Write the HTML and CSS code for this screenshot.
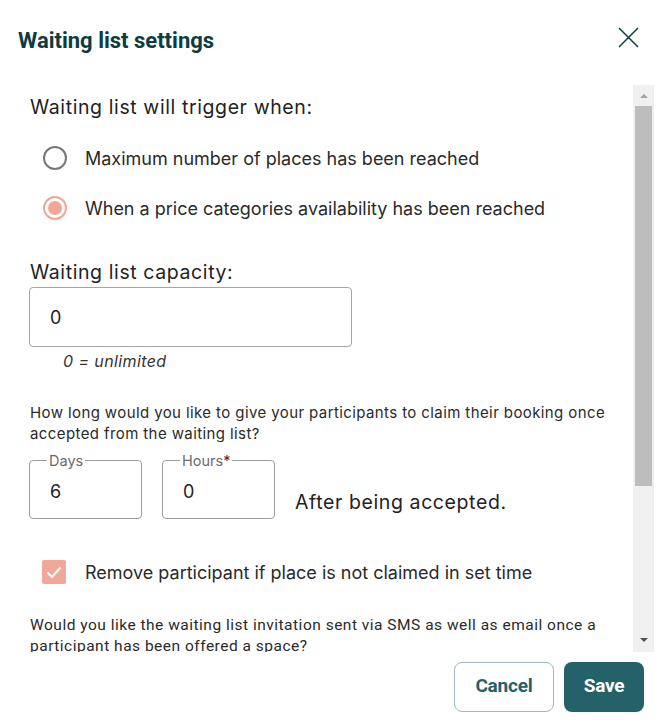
FILE: index.html
```html
<!DOCTYPE html>
<html lang="en">
<head>
<meta charset="utf-8">
<title>Waiting list settings</title>
<link rel="stylesheet" href="styles.css">
</head>
<body>
<div class="dialog">
  <header class="head">
    <h1 class="title">Waiting list settings</h1>
    <button class="close" aria-label="Close">
      <svg width="21" height="21" viewBox="0 0 21 21"><path d="M1 1 L20 20 M20 1 L1 20" stroke="#0b3d40" stroke-width="1.5" fill="none"/></svg>
    </button>
  </header>
  <div class="body">
    <div class="content">
      <p class="q">Waiting list will trigger when:</p>
      <div class="radios">
        <label class="radio"><span class="ring"></span>Maximum number of places has been reached</label>
        <label class="radio on"><span class="ring"></span>When a price categories availability has been reached</label>
      </div>
      <p class="q cap">Waiting list capacity:</p>
      <div class="input">0</div>
      <p class="hint">0 = unlimited</p>
      <p class="small">How long would you like to give your participants to claim their booking once accepted from the waiting list?</p>
      <div class="timerow">
        <fieldset class="box"><legend>Days</legend><span class="val">6</span></fieldset>
        <fieldset class="box"><legend>Hours<span class="req">*</span></legend><span class="val">0</span></fieldset>
        <span class="after">After being accepted.</span>
      </div>
      <label class="check"><span class="tick"><svg width="24" height="24" viewBox="0 0 24 24"><path d="M5.5 12.5 L10 17 L18.5 7.5" stroke="#fff" stroke-width="2" fill="none"/></svg></span>Remove participant if place is not claimed in set time</label>
      <p class="sms">Would you like the waiting list invitation sent via SMS as well as email once a participant has been offered a space?</p>
    </div>
    <div class="scrollbar" aria-hidden="true">
      <span class="sb-btn"><span class="arrow up"></span></span>
      <span class="sb-thumb"></span>
      <span class="sb-rest"></span>
      <span class="sb-btn"><span class="arrow down"></span></span>
    </div>
  </div>
  <footer class="foot">
    <button class="btn cancel">Cancel</button>
    <button class="btn save">Save</button>
  </footer>
</div>
</body>
</html>
```

FILE: styles.css
```css
* { box-sizing: border-box; }
html, body { margin: 0; padding: 0; background: #fff; }
body { font-family: Inter, "Noto Sans", sans-serif; color: #222; }

.dialog {
  width: 663px;
  height: 723px;
  display: flex;
  flex-direction: column;
  background: #fff;
}

.head {
  height: 85px;
  flex: none;
  display: flex;
  justify-content: space-between;
  align-items: flex-start;
  padding: 27px 24px 0 18px;
}
.title {
  margin: 0;
  font-family: Roboto, "Liberation Sans", sans-serif;
  font-weight: 700;
  font-size: 22px;
  line-height: 28px;
  letter-spacing: 0;
  color: #0b3d40;
}
.close {
  padding: 0;
  border: 0;
  background: none;
  width: 21px;
  height: 21px;
}
.close svg { display: block; }

.body {
  height: 567px;
  flex: none;
  margin-right: 9px;
  display: flex;
}
.content {
  flex: 1;
  min-width: 0;
  overflow: hidden;
  padding: 10px 0 0 30px;
}

.scrollbar {
  width: 21px;
  flex: none;
  background: #f0f0f0;
  display: flex;
  flex-direction: column;
}
.sb-btn {
  height: 21px;
  flex: none;
  display: flex;
  align-items: center;
  justify-content: center;
}
.sb-thumb {
  height: 380px;
  margin: 0 2px;
  background: #bdbdbd;
  flex: none;
}
.sb-rest { flex: 1; }
.arrow {
  width: 0;
  height: 0;
  border-left: 4px solid transparent;
  border-right: 4px solid transparent;
}
.arrow.up { border-bottom: 4px solid #a3a3a3; margin-top: 1px; }
.arrow.down { border-top: 4px solid #505050; margin-top: -4px; }

p { margin: 0; }
.q {
  font-size: 19.5px;
  line-height: 24px;
  letter-spacing: 0.6px;
  color: #222;
}
.radios { margin-top: 14px; }
.radio {
  display: flex;
  align-items: center;
  height: 50px;
  font-size: 18px;
  color: #2a2a2a;
}
.ring {
  width: 24px;
  height: 24px;
  border-radius: 50%;
  border: 2px solid #777;
  margin: 0 18px 0 13px;
  flex: none;
  display: flex;
  align-items: center;
  justify-content: center;
}
.radio.on .ring { border-color: #f0a798; }
.radio.on .ring::after {
  content: "";
  width: 14px;
  height: 14px;
  border-radius: 50%;
  background: #f0a798;
}

.cap { margin-top: 27px; }
.input {
  margin-top: 3px;
  margin-left: -1px;
  width: 323px;
  height: 60px;
  border: 1px solid #a5a5a5;
  border-radius: 4px;
  padding-left: 20px;
  display: flex;
  align-items: center;
  font-size: 18px;
  color: #222;
}
.hint {
  margin-top: 5px;
  margin-left: 33px;
  font-size: 16px;
  line-height: 18px;
  letter-spacing: 0.4px;
  font-style: italic;
  color: #333;
}
.small {
  margin-top: 32px;
  font-size: 15px;
  line-height: 21px;
  letter-spacing: 0.4px;
  color: #2a2a2a;
  padding-right: 10px;
}

.timerow {
  margin-top: 8px;
  display: flex;
  align-items: flex-end;
  gap: 20px;
}
.box {
  margin: 0 0 0 -1px;
  width: 113px;
  height: 67px;
  border: 1px solid #9d9d9d;
  border-radius: 4px;
  padding: 0 0 0 20px;
  display: flex;
  align-items: center;
}
.box + .box { margin-left: 0; }
.box legend {
  padding: 0 2px;
  margin-left: -3px;
  font-size: 14.5px;
  line-height: 17px;
  color: #6b6b6b;
}
.req { color: #5a1f1f; }
.val {
  display: block;
  font-size: 18px;
  line-height: 24px;
  margin-top: -4px;
  color: #222;
}
.after {
  font-size: 19.5px;
  line-height: 24px;
  letter-spacing: 0.6px;
  margin: 0 0 5px 0;
  color: #222;
}

.check {
  margin-top: 41px;
  display: flex;
  align-items: center;
  height: 24px;
  font-size: 18px;
  color: #2a2a2a;
}
.tick {
  width: 24px;
  height: 24px;
  border-radius: 2px;
  background: #f1a898;
  margin: 0 19px 0 12px;
  flex: none;
}
.tick svg { display: block; }

.sms {
  margin-top: 31px;
  font-family: Roboto, "Liberation Sans", sans-serif;
  font-size: 15.5px;
  line-height: 21px;
  letter-spacing: 0.5px;
  color: #2a2a2a;
  padding-right: 10px;
}

.foot {
  flex: none;
  display: flex;
  justify-content: flex-end;
  gap: 10px;
  padding: 10px 19px 0 0;
}
.btn {
  height: 50px;
  border-radius: 8px;
  font-family: Roboto, "Liberation Sans", sans-serif;
  font-weight: 700;
  font-size: 19px;
  letter-spacing: -0.2px;
  line-height: 46px;
  padding: 0 0 2px;
  cursor: pointer;
}
.cancel {
  width: 100px;
  background: #fff;
  border: 1px solid #9dbcc0;
  color: #246168;
}
.save {
  width: 80px;
  background: #246168;
  border: 0;
  color: #fff;
}
```
